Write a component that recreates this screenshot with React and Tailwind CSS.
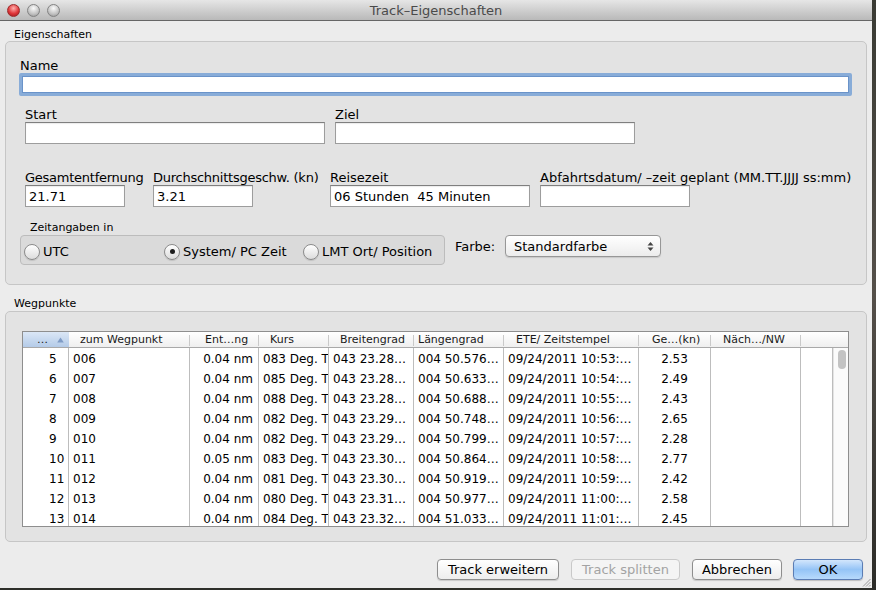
import React from 'react';

const rows = [
  ['5', '006', '0.04 nm', '083 Deg. T', '043 23.28…', '004 50.576…', '09/24/2011 10:53:…', '2.53'],
  ['6', '007', '0.04 nm', '085 Deg. T', '043 23.28…', '004 50.633…', '09/24/2011 10:54:…', '2.49'],
  ['7', '008', '0.04 nm', '088 Deg. T', '043 23.28…', '004 50.688…', '09/24/2011 10:55:…', '2.43'],
  ['8', '009', '0.04 nm', '082 Deg. T', '043 23.29…', '004 50.748…', '09/24/2011 10:56:…', '2.65'],
  ['9', '010', '0.04 nm', '082 Deg. T', '043 23.29…', '004 50.799…', '09/24/2011 10:57:…', '2.28'],
  ['10', '011', '0.05 nm', '083 Deg. T', '043 23.30…', '004 50.864…', '09/24/2011 10:58:…', '2.77'],
  ['11', '012', '0.04 nm', '081 Deg. T', '043 23.30…', '004 50.919…', '09/24/2011 10:59:…', '2.42'],
  ['12', '013', '0.04 nm', '080 Deg. T', '043 23.31…', '004 50.977…', '09/24/2011 11:00:…', '2.58'],
  ['13', '014', '0.04 nm', '084 Deg. T', '043 23.32…', '004 51.033…', '09/24/2011 11:01:…', '2.45'],
];

// widths include the 1px right border of each body cell
const cols = [
  { w: 'w-[46px]', cls: 'pl-[26px]' },
  { w: 'w-[121px]', cls: 'pl-[4px]' },
  { w: 'w-[69px]', cls: 'pr-[5px] text-right' },
  { w: 'w-[70px]', cls: 'pl-[4px]' },
  { w: 'w-[85px]', cls: 'pl-[4px]' },
  { w: 'w-[90px]', cls: 'pl-[4px]' },
  { w: 'w-[135px]', cls: 'pl-[4px]' },
  { w: 'w-[72px]', cls: 'text-center' },
  { w: 'w-[90px]', cls: '' },
  { w: 'w-[32px]', cls: '' },
];

const headers = [
  { label: 'zum Wegpunkt', w: 'w-[121px]', pl: 'pl-[11px]' },
  { label: 'Ent…ng', w: 'w-[69px]', pl: 'pl-[15px]' },
  { label: 'Kurs', w: 'w-[70px]', pl: 'pl-[11px]' },
  { label: 'Breitengrad', w: 'w-[85px]', pl: 'pl-[11px]' },
  { label: 'Längengrad', w: 'w-[90px]', pl: 'pl-[4px]' },
  { label: 'ETE/ Zeitstempel', w: 'w-[135px]', pl: 'pl-[12px]' },
  { label: 'Ge…(kn)', w: 'w-[72px]', pl: 'pl-[13px]' },
  { label: 'Näch…/NW', w: 'w-[90px]', pl: 'pl-[12px]' },
];

const Field = ({ className, value }) => (
  <div className={`h-[22px] border border-[#9d9d9d] border-t-[#7f7f7f] bg-white pl-[3px] pt-[1px] text-[13px] leading-[19px] shadow-[inset_0_1px_1px_rgba(0,0,0,0.08)] ${className}`}>
    {value}
  </div>
);

const Label = ({ children, className = '' }) => (
  <div className={`h-[16px] whitespace-nowrap pt-[2px] text-[13px] leading-[14px] ${className}`}>{children}</div>
);

const Radio = ({ checked }) => (
  <span className="flex h-[16px] w-[16px] shrink-0 items-center justify-center rounded-full border border-[#8b8b8b] bg-linear-to-b from-white to-[#dcdcdc] shadow-[0_1px_1px_rgba(0,0,0,0.12)]">
    {checked && <span className="h-[5px] w-[5px] rounded-full bg-[#1e1e1e]" />}
  </span>
);

const Button = ({ className, children, disabled, primary }) => (
  <div
    className={`flex h-[21px] items-center justify-center rounded-[4px] border pt-[1px] text-[13px] ${
      primary
        ? 'border-[#5b7db4] bg-linear-to-b from-[#d3e6fc] via-[#95c4f6] to-[#b7dafc] text-black shadow-[0_1px_1px_rgba(0,0,0,0.2)]'
        : disabled
          ? 'border-[#c9c9c9] bg-[#f4f4f4] text-[#a3a3a3]'
          : 'border-[#8e8e8e] bg-linear-to-b from-white to-[#ededed] text-black shadow-[0_1px_1px_rgba(0,0,0,0.15)]'
    } ${className}`}
  >
    {children}
  </div>
);

const Light = ({ red }) => (
  <span
    className={`h-[13px] w-[13px] rounded-full border ${
      red
        ? 'border-[#9b2a2a] bg-[radial-gradient(circle_at_50%_30%,#ffb0ad,#e0383b_55%,#9c1518)]'
        : 'border-[#838383] bg-[radial-gradient(circle_at_50%_30%,#fbfbfb,#c2c2c2_60%,#8f8f8f)]'
    }`}
  />
);

export default function App() {
  return (
    <div className="flex h-[590px] w-[876px] bg-[#2e2f2a] font-['DejaVu_Sans',sans-serif] text-black">
      <div className="relative flex h-[588px] w-[872px] flex-col bg-[#ececec]">
        {/* title bar */}
        <div className="grid h-[21px] grid-cols-[1fr_auto_1fr] items-center border-b border-[#666] bg-linear-to-b from-[#e6e6e6] to-[#b9b9b9]">
          <div className="flex items-center gap-[7px] pl-[7px]">
            <Light red />
            <Light />
            <Light />
          </div>
          <div className="pt-[1px] text-[13px] text-[#4a4a4a]">Track–Eigenschaften</div>
          <div />
        </div>

        <div className="ml-[14px] mt-[7px] text-[11px] leading-[13px]">Eigenschaften</div>

        {/* Eigenschaften group */}
        <div className="ml-[5px] h-[244px] w-[862px] rounded-[5px] border border-[#c6c6c6] bg-[#e3e3e3]">
          <Label className="ml-[14px] mt-[15px]">Name</Label>
          <div className="ml-[13px] h-[23px] w-[833px] rounded-[2px] border-[3px] border-[#88acd8] bg-white shadow-[inset_0_0_0_1px_#6a93c9]" />

          <div className="ml-[19px] mt-[10px] flex">
            <div className="w-[310px]">
              <Label>Start</Label>
              <Field className="w-[300px]" />
            </div>
            <div>
              <Label>Ziel</Label>
              <Field className="w-[300px]" />
            </div>
          </div>

          <div className="ml-[19px] mt-[25px] flex">
            <div className="w-[128px]">
              <Label className="tracking-[-0.25px]">Gesamtentfernung</Label>
              <Field className="w-[100px]" value="21.71" />
            </div>
            <div className="w-[177px]">
              <Label className="tracking-[-0.25px]">Durchschnittsgeschw. (kn)</Label>
              <Field className="w-[100px]" value="3.21" />
            </div>
            <div className="w-[210px]">
              <Label>Reisezeit</Label>
              <Field className="w-[200px] whitespace-pre" value="06 Stunden  45 Minuten" />
            </div>
            <div>
              <Label>Abfahrtsdatum/ –zeit geplant (MM.TT.JJJJ ss:mm)</Label>
              <Field className="w-[150px]" />
            </div>
          </div>

          <div className="ml-[24px] mt-[14px] text-[11px] leading-[13px]">Zeitangaben in</div>
          <div className="ml-[14px] mt-[1px] flex items-start">
            <div className="flex h-[30px] w-[425px] items-center rounded-[4px] border border-[#bcbcbc] bg-[#dadada] pl-[3px] pt-[3px] text-[13px]">
              <div className="flex w-[140px] items-center gap-[3px]">
                <Radio />
                <span>UTC</span>
              </div>
              <div className="flex w-[139px] items-center gap-[3px]">
                <Radio checked />
                <span className="whitespace-nowrap">System/ PC Zeit</span>
              </div>
              <div className="flex items-center gap-[3px]">
                <Radio />
                <span className="whitespace-nowrap">LMT Ort/ Position</span>
              </div>
            </div>
            <div className="ml-[10px] flex h-[22px] w-[50px] items-center pt-[2px] text-[13px]">Farbe:</div>
            <div className="flex h-[22px] w-[156px] items-center justify-between rounded-[4px] border border-[#979797] bg-linear-to-b from-white to-[#ececec] pl-[8px] pr-[6px] pt-[1px] text-[13px] shadow-[0_1px_1px_rgba(0,0,0,0.12)]">
              <span>Standardfarbe</span>
              <svg width="7" height="11" viewBox="0 0 7 11" aria-hidden="true">
                <path d="M3.5 1L6.5 4.5H0.5Z" fill="#444" />
                <path d="M3.5 10L6.5 6.5H0.5Z" fill="#444" />
              </svg>
            </div>
          </div>
        </div>

        <div className="ml-[14px] mt-[12px] text-[11px] leading-[13px]">Wegpunkte</div>

        {/* Wegpunkte group */}
        <div className="ml-[5px] mt-[1px] h-[231px] w-[862px] rounded-[5px] border border-[#c6c6c6] bg-[#e3e3e3]">
          <div className="ml-[16px] mt-[19px] h-[196px] w-[827px] overflow-hidden border border-[#8e8e8e] bg-white">
            {/* header */}
            <div className="flex h-[16px] border-b border-[#a9a9a9] bg-linear-to-b from-white to-[#efefef] pt-[1px] text-[11px] leading-[14px] text-[#1a1a1a]">
              <div className="-mt-[1px] flex w-[46px] items-center bg-linear-to-b from-[#dbe7f6] to-[#b4cbe8] pt-[1px]">
                <span className="pl-[14px]">…</span>
                <svg className="ml-auto mr-[5px]" width="7" height="6" viewBox="0 0 7 6" aria-hidden="true">
                  <path d="M3.5 0.5L6.8 5.5H0.2Z" fill="#7f9cc6" />
                </svg>
              </div>
              {headers.map((h) => (
                <div key={h.label} className={`flex ${h.w} items-center`}>
                  <span className={`overflow-hidden whitespace-nowrap ${h.pl}`}>{h.label}</span>
                  <span className="ml-auto h-[11px] w-px bg-[#c9c9c9]" />
                </div>
              ))}
              <div className="w-[47px]" />
            </div>

            {/* body */}
            <div className="flex">
              <div className="w-[810px]">
                {rows.map((row) => (
                  <div key={row[0]} className="flex h-[20px] text-[12px] leading-[18px]">
                    {cols.map((c, i) => (
                      <div key={i} className={`${c.w} overflow-hidden whitespace-nowrap border-r border-[#bdbdbd] pt-[2px] ${c.cls}`}>
                        {row[i] || ''}
                      </div>
                    ))}
                  </div>
                ))}
              </div>
              <div className="h-[180px] w-[15px] border-l border-[#e4e4e4] bg-[#fbfbfb]">
                <div className="ml-[4px] mt-[2px] h-[19px] w-[8px] rounded-full bg-[#c3c3c3]" />
              </div>
            </div>
          </div>
        </div>

        {/* buttons */}
        <div className="mt-[17px] flex justify-end pr-[9px]">
          <Button className="w-[122px]">Track erweitern</Button>
          <Button className="ml-[12px] w-[109px]" disabled>Track splitten</Button>
          <Button className="ml-[12px] w-[90px]">Abbrechen</Button>
          <Button className="ml-[11px] w-[70px]" primary>OK</Button>
        </div>

        <svg className="absolute bottom-[1px] right-[1px]" width="9" height="9" viewBox="0 0 9 9" aria-hidden="true">
          <path d="M8.5 1L1 8.5M8.5 4L4 8.5M8.5 7L7 8.5" stroke="#9a9a9a" strokeWidth="1" />
        </svg>
      </div>
      <div className="flex-1 bg-linear-to-b from-[#3a3b34] via-[#55504a] to-[#2c2c28]" />
    </div>
  );
}
